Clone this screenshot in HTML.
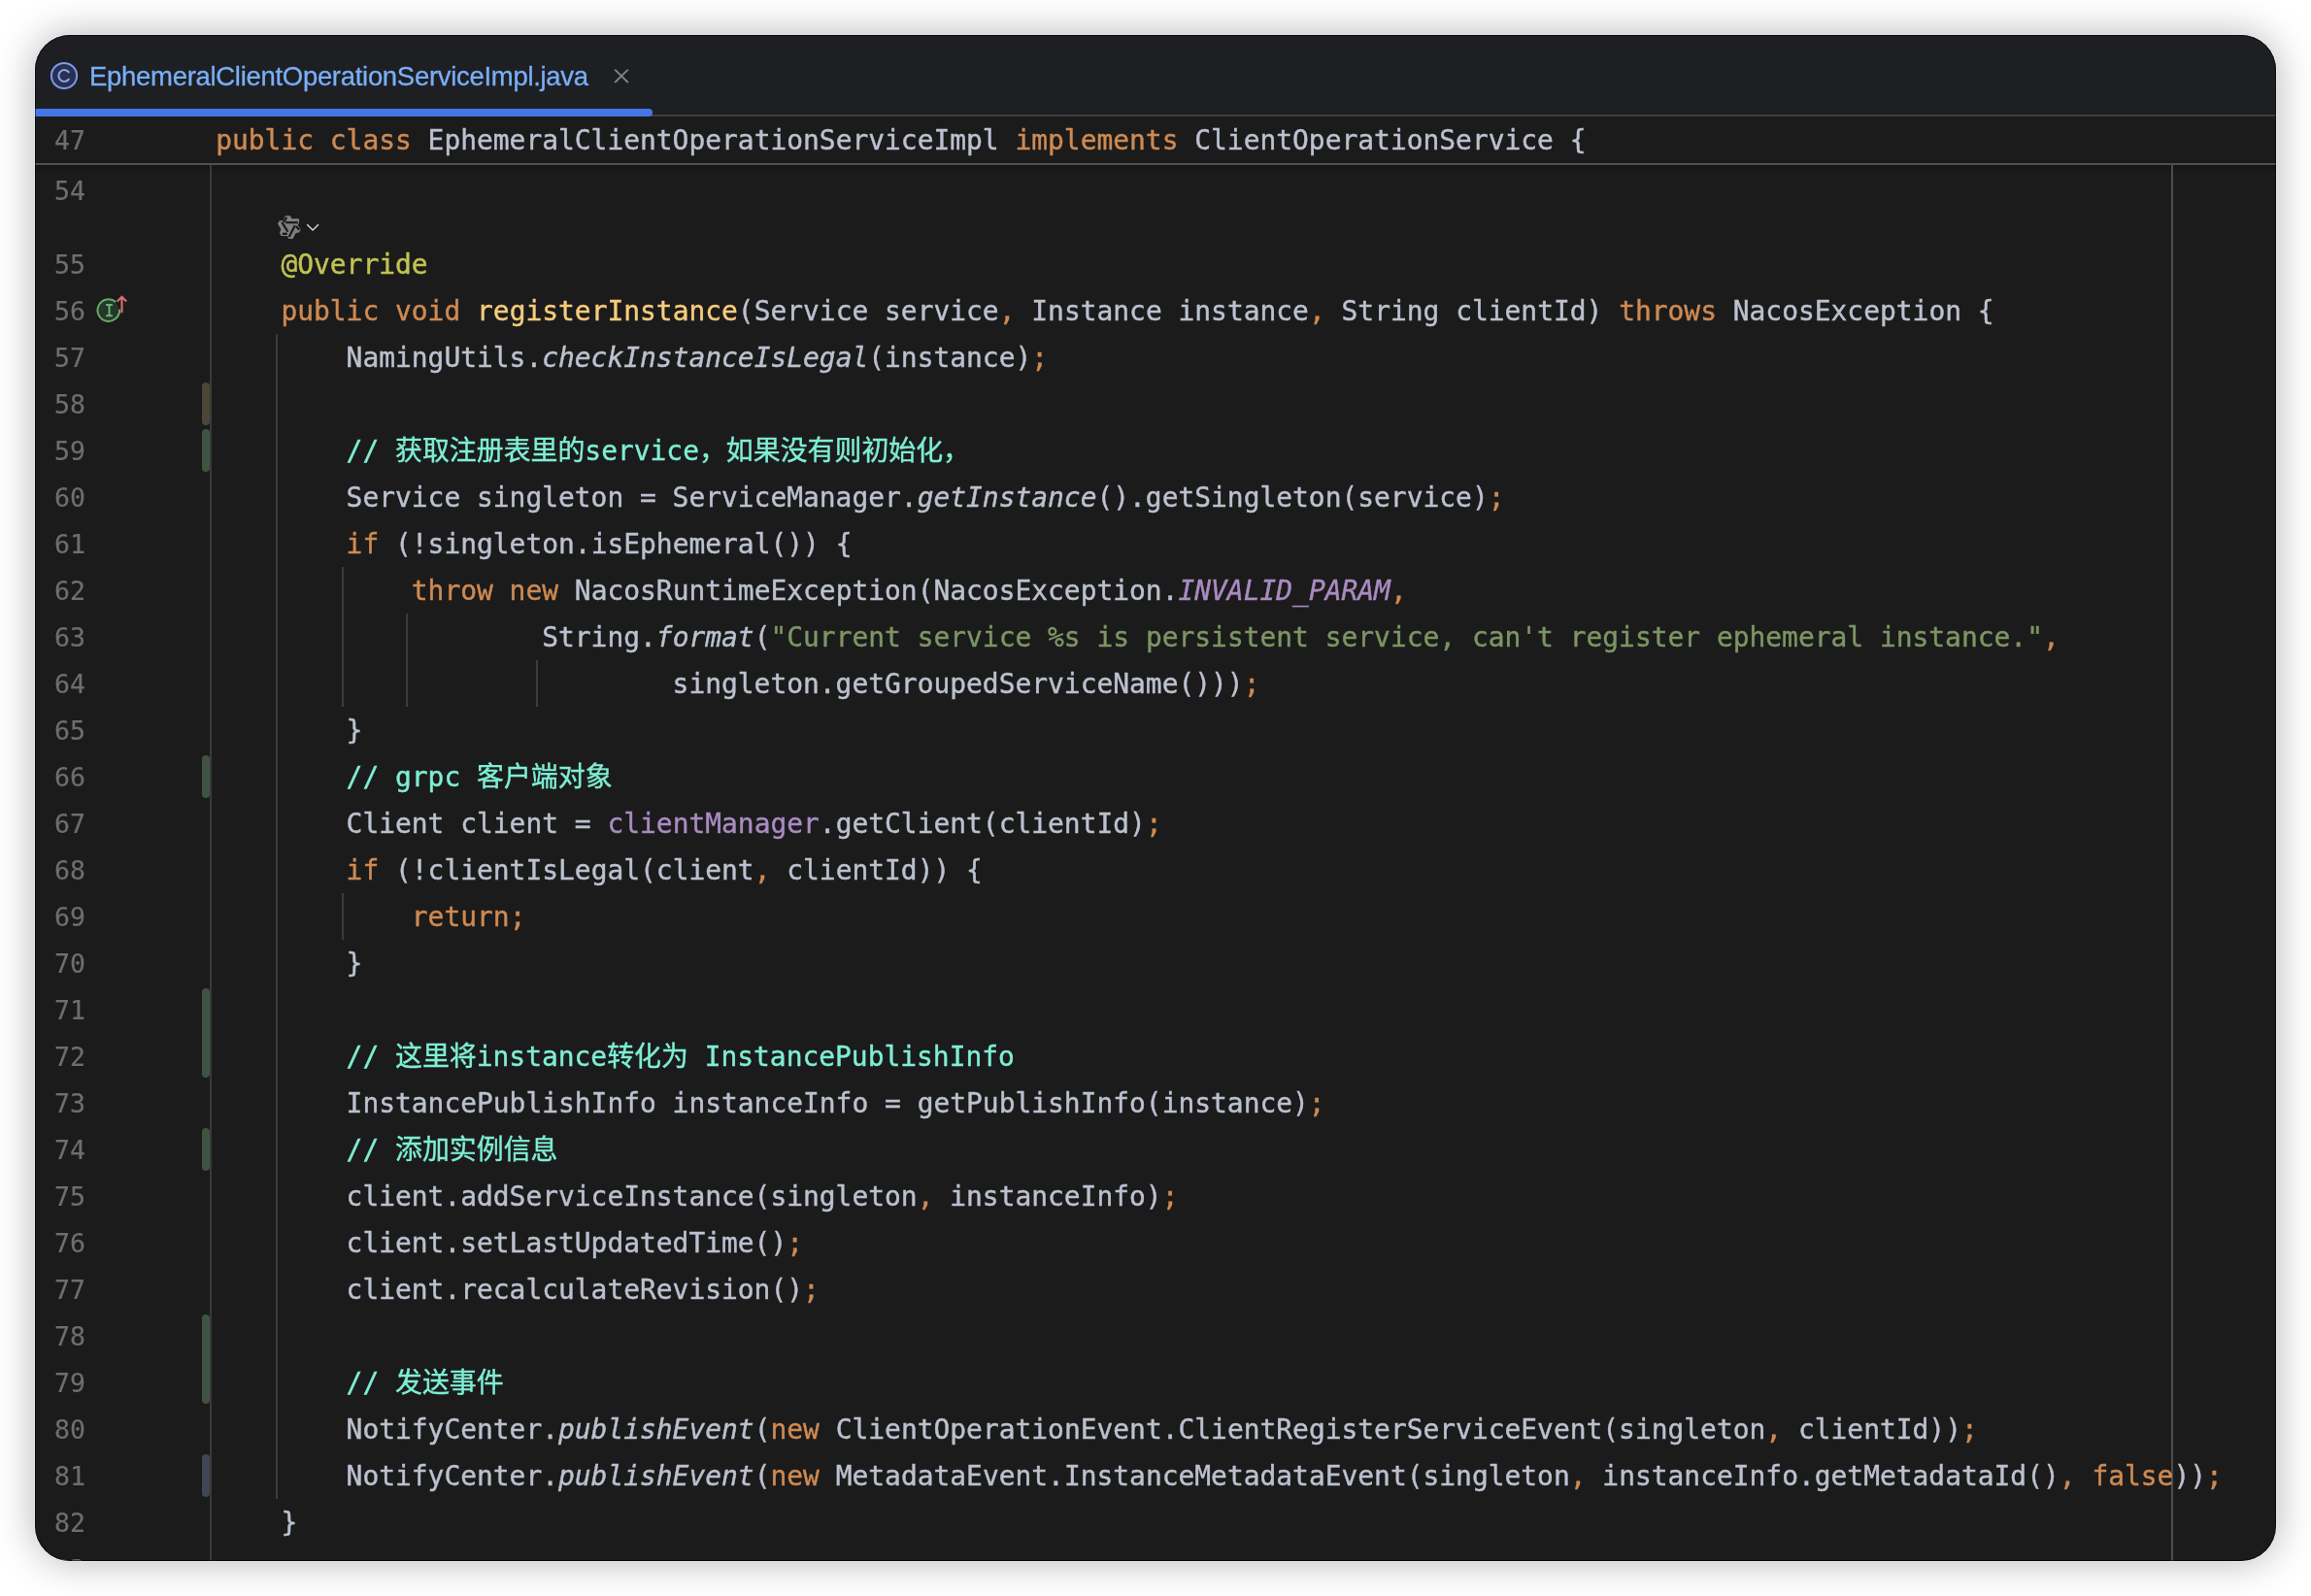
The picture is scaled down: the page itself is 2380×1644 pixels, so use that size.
<!DOCTYPE html>
<html lang="zh"><head><meta charset="utf-8"><title>EphemeralClientOperationServiceImpl.java</title>
<style>
html,body{margin:0;padding:0;background:#fff;}
body{width:2380px;height:1644px;position:relative;overflow:hidden;}
.win{position:absolute;left:36px;top:36px;width:2308px;height:1572px;border-radius:36px;background:#1b1b1b;overflow:hidden;
 }
.shadow{position:absolute;left:36px;top:36px;width:2308px;height:1572px;border-radius:36px;
 box-shadow:0 0 40px rgba(0,0,0,.30);}
.edge{position:absolute;left:36px;top:36px;width:2308px;height:1572px;border-radius:36px;box-sizing:border-box;border:1px solid rgba(0,0,0,.5);box-shadow:0 0 0 1px rgba(255,255,255,.28);pointer-events:none;}
.pg{position:absolute;left:-36px;top:-36px;width:2380px;height:1644px;will-change:transform;}
.pg *{position:absolute;box-sizing:border-box;}
.tabbar{left:36px;top:36px;width:2308px;height:82px;background:#1e1f22;}
.tabsep{left:36px;top:118px;width:2308px;height:2px;background:#3e3f42;}
.tabul{left:36px;top:112px;width:636px;height:8px;background:#4676e8;border-radius:0 4px 4px 0;}
.tabtxt{left:92px;top:59px;-webkit-text-stroke:0.3px currentColor;height:40px;line-height:40px;font-family:"Liberation Sans",sans-serif;font-size:27.5px;color:#79aef8;white-space:pre;letter-spacing:-0.3px;}
.sticky{left:36px;top:120px;width:2308px;height:48px;background:#1b1b1b;}
.stsep{left:36px;top:168px;width:2308px;height:2px;background:#505050;}
.stshadow{left:36px;top:170px;width:2308px;height:9px;background:linear-gradient(#161616,rgba(27,27,27,0));}
.gline{left:216px;top:170px;width:2px;height:1440px;background:#3a3a3a;}
.rmargin{left:2236px;top:170px;width:2px;height:1440px;background:#4d4d4d;}
.ig{width:2px;background:#3c3c3c;}
.ln{font-family:"DejaVu Sans Mono","Liberation Mono",monospace;font-size:26.5px;color:#6e6e6e;-webkit-text-stroke:0.2px currentColor;height:48px;line-height:48px;left:56.0px;white-space:pre;}
.cl{font-family:"DejaVu Sans Mono","Liberation Mono","Noto Sans CJK SC",monospace;font-size:27.915px;color:#bbc1cf;-webkit-text-stroke:0.4px currentColor;height:48px;line-height:48px;left:222.2px;white-space:pre;font-variant-ligatures:none;}
.cl span,.cl i{position:static;}
.k{color:#ce8a52;}
.m{color:#f7cb7c;}
.a{color:#c2c253;}
.s{color:#7d9564;}
.f{color:#a98bc2;}
.c{color:#7eeed4;}
.mk{left:208px;width:8px;border-radius:4px;}
.g{background:#3f5340;}
.b{background:#4a4638;}
.bl{background:#3e4752;}
svg{overflow:visible;}
</style></head><body>
<div class="shadow"></div>
<div class="win"><div class="pg">
<div class="tabbar"></div><div class="tabsep"></div><div class="tabul"></div>
<svg style="left:50px;top:62px" width="32" height="32" viewBox="0 0 32 32"><circle cx="16" cy="16" r="13.1" fill="#293050" stroke="#7a9aee" stroke-width="2"/><path d="M21.3 12.87 A5.9 5.9 0 1 0 21.3 19.13" fill="none" stroke="#8aa6f0" stroke-width="2"/></svg>
<div class="tabtxt">EphemeralClientOperationServiceImpl.java</div>
<svg style="left:632px;top:70px" width="16" height="16" viewBox="0 0 16 16"><path d="M1.2 1.6 L14.8 15 M14.8 1.6 L1.2 15" stroke="#80838a" stroke-width="1.9" fill="none"/></svg>
<div class="sticky"></div><div class="stsep"></div><div class="stshadow"></div><div class="gline"></div><div class="rmargin"></div>
<div class="mk b" style="top:394px;height:44px"></div>
<div class="mk g" style="top:442px;height:44px"></div>
<div class="mk g" style="top:778px;height:44px"></div>
<div class="mk g" style="top:1018px;height:92px"></div>
<div class="mk g" style="top:1162px;height:44px"></div>
<div class="mk g" style="top:1354px;height:92px"></div>
<div class="mk bl" style="top:1498px;height:44px"></div>
<div class="ig" style="left:284.0px;top:344px;height:1200px"></div>
<div class="ig" style="left:352.0px;top:584px;height:144px"></div>
<div class="ig" style="left:418.0px;top:632px;height:96px"></div>
<div class="ig" style="left:552.0px;top:680px;height:48px"></div>
<div class="ig" style="left:352.0px;top:920px;height:48px"></div>
<svg style="left:270px;top:205px" width="80" height="55" viewBox="0 0 2311 1589">
<polygon fill="#808080" points="690,495 835,495 875,585 1095,585 1100,690 1060,780 1150,900 1100,1000 1000,1010 910,1185 790,1185 750,1100 560,1095 520,1000 560,900 460,730 520,640 620,640"/>
<g stroke="#1b1b1b" stroke-width="66" fill="none" stroke-linecap="butt"><path d="M700,700 L1065,700"/><path d="M975,790 L800,1125"/><path d="M585,690 L765,975"/><path d="M725,545 L640,690"/><path d="M1010,810 L1105,915"/><path d="M600,1035 L745,1035"/></g>
<path d="M1335,758 L1505,925 L1675,758" fill="none" stroke="#d4d4d4" stroke-width="42"/>
</svg>
<svg style="left:96px;top:300px" width="40" height="36" viewBox="0 0 40 36">
<path d="M23.3 11.1 A11.3 11.3 0 1 0 27.1 18.8" fill="#25372a" stroke="#66a96b" stroke-width="2"/>
<path d="M13.1 13.9 H19.9 M16.5 13.9 V25.3 M13.1 25.3 H19.9" stroke="#6eb077" stroke-width="2" fill="none"/>
<path d="M29.5 22.2 V5.6 M24.8 10.6 L29.5 5.7 L34.2 10.6" stroke="#de6d6c" stroke-width="2.1" fill="none"/>
</svg>
<div class="ln" style="top:121px">47</div><div class="cl" style="top:121px"><span class="k">public class </span>EphemeralClientOperationServiceImpl <span class="k">implements </span>ClientOperationService {</div>
<div class="ln" style="top:173px">54</div>
<div class="ln" style="top:249px">55</div><div class="cl" style="top:249px">    <span class="a">@Override</span></div>
<div class="ln" style="top:297px">56</div><div class="cl" style="top:297px">    <span class="k">public void </span><span class="m">registerInstance</span>(Service service<span class="k">,</span> Instance instance<span class="k">,</span> String clientId) <span class="k">throws </span>NacosException {</div>
<div class="ln" style="top:345px">57</div><div class="cl" style="top:345px">        NamingUtils.<i>checkInstanceIsLegal</i>(instance)<span class="k">;</span></div>
<div class="ln" style="top:393px">58</div>
<div class="ln" style="top:441px">59</div><div class="cl" style="top:441px">        <span class="c">// 获取注册表里的service，如果没有则初始化，</span></div>
<div class="ln" style="top:489px">60</div><div class="cl" style="top:489px">        Service singleton = ServiceManager.<i>getInstance</i>().getSingleton(service)<span class="k">;</span></div>
<div class="ln" style="top:537px">61</div><div class="cl" style="top:537px">        <span class="k">if </span>(!singleton.isEphemeral()) {</div>
<div class="ln" style="top:585px">62</div><div class="cl" style="top:585px">            <span class="k">throw new </span>NacosRuntimeException(NacosException.<i class="f">INVALID_PARAM</i><span class="k">,</span></div>
<div class="ln" style="top:633px">63</div><div class="cl" style="top:633px">                    String.<i>format</i>(<span class="s">"Current service %s is persistent service, can't register ephemeral instance."</span><span class="k">,</span></div>
<div class="ln" style="top:681px">64</div><div class="cl" style="top:681px">                            singleton.getGroupedServiceName()))<span class="k">;</span></div>
<div class="ln" style="top:729px">65</div><div class="cl" style="top:729px">        }</div>
<div class="ln" style="top:777px">66</div><div class="cl" style="top:777px">        <span class="c">// grpc 客户端对象</span></div>
<div class="ln" style="top:825px">67</div><div class="cl" style="top:825px">        Client client = <span class="f">clientManager</span>.getClient(clientId)<span class="k">;</span></div>
<div class="ln" style="top:873px">68</div><div class="cl" style="top:873px">        <span class="k">if </span>(!clientIsLegal(client<span class="k">,</span> clientId)) {</div>
<div class="ln" style="top:921px">69</div><div class="cl" style="top:921px">            <span class="k">return</span><span class="k">;</span></div>
<div class="ln" style="top:969px">70</div><div class="cl" style="top:969px">        }</div>
<div class="ln" style="top:1017px">71</div>
<div class="ln" style="top:1065px">72</div><div class="cl" style="top:1065px">        <span class="c">// 这里将instance转化为 InstancePublishInfo</span></div>
<div class="ln" style="top:1113px">73</div><div class="cl" style="top:1113px">        InstancePublishInfo instanceInfo = getPublishInfo(instance)<span class="k">;</span></div>
<div class="ln" style="top:1161px">74</div><div class="cl" style="top:1161px">        <span class="c">// 添加实例信息</span></div>
<div class="ln" style="top:1209px">75</div><div class="cl" style="top:1209px">        client.addServiceInstance(singleton<span class="k">,</span> instanceInfo)<span class="k">;</span></div>
<div class="ln" style="top:1257px">76</div><div class="cl" style="top:1257px">        client.setLastUpdatedTime()<span class="k">;</span></div>
<div class="ln" style="top:1305px">77</div><div class="cl" style="top:1305px">        client.recalculateRevision()<span class="k">;</span></div>
<div class="ln" style="top:1353px">78</div>
<div class="ln" style="top:1401px">79</div><div class="cl" style="top:1401px">        <span class="c">// 发送事件</span></div>
<div class="ln" style="top:1449px">80</div><div class="cl" style="top:1449px">        NotifyCenter.<i>publishEvent</i>(<span class="k">new </span>ClientOperationEvent.ClientRegisterServiceEvent(singleton<span class="k">,</span> clientId))<span class="k">;</span></div>
<div class="ln" style="top:1497px">81</div><div class="cl" style="top:1497px">        NotifyCenter.<i>publishEvent</i>(<span class="k">new </span>MetadataEvent.InstanceMetadataEvent(singleton<span class="k">,</span> instanceInfo.getMetadataId()<span class="k">, </span><span class="k">false</span>))<span class="k">;</span></div>
<div class="ln" style="top:1545px">82</div><div class="cl" style="top:1545px">    }</div>
<div class="ln" style="top:1593px">83</div>
</div></div>
<div class="edge"></div>
</body></html>
